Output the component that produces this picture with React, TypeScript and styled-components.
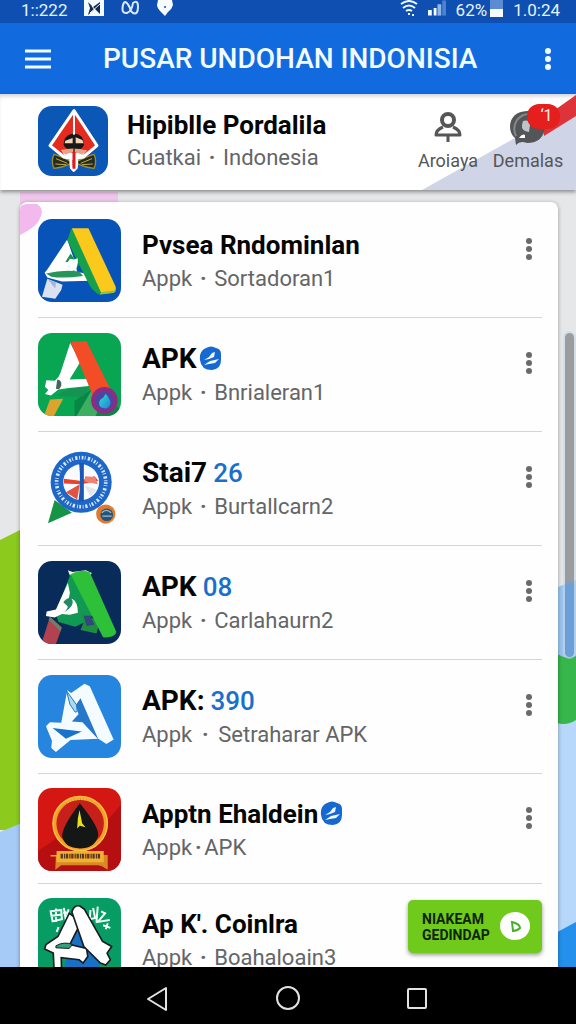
import React from "react";
import styled, { createGlobalStyle } from "styled-components";

const GlobalStyle = createGlobalStyle`
  *, *::before, *::after { box-sizing: border-box; }
  body { margin: 0; background: #000; font-family: Roboto, "Liberation Sans", sans-serif; }
  button { border: 0; padding: 0; background: none; font: inherit; color: inherit; cursor: pointer; }
  h1, h2, p, ul { margin: 0; padding: 0; }
  svg { display: block; }
`;

const Screen = styled.div`
  display: flex;
  flex-direction: column;
  height: 100vh;
  background: #e6e7e9;
`;

const StatusBar = styled.div`
  display: flex;
  align-items: flex-start;
  justify-content: space-between;
  flex: none;
  height: 23px;
  padding: 0 16px 0 21px;
  background: #0f4fb2;
  color: #e4f4ff;
  font-size: 17px;
  line-height: 20px;
`;

const StatusGroup = styled.div<{ $gap: number }>`
  display: flex;
  align-items: flex-start;
  gap: ${(p) => p.$gap}px;
`;

const BatteryGroup = styled.div`
  display: flex;
  align-items: flex-start;
  gap: 3px;
`;

const AppBar = styled.header`
  display: flex;
  align-items: center;
  flex: none;
  height: 71px;
  padding: 0 16px;
  background: #116bdf;
  color: #f2fbff;
`;

const BarButton = styled.button`
  display: grid;
  place-items: center;
  flex: none;
  width: 44px;
  height: 44px;
`;

const MoreBarButton = styled(BarButton)`
  width: 24px;
`;

const AppTitle = styled.h1`
  flex: 1;
  padding-left: 43px;
  font-size: 28px;
  line-height: 36px;
  font-weight: 500;
  white-space: nowrap;
`;

const Profile = styled.section`
  position: relative;
  z-index: 1;
  display: flex;
  align-items: flex-start;
  flex: none;
  height: 96px;
  padding: 12px 8px 0 38px;
  background: #fff;
  box-shadow: 0 2px 4px rgba(0, 0, 0, 0.4), inset 0 4px 4px -2px rgba(0, 0, 60, 0.2);
`;

const ProfileArt = styled.svg`
  position: absolute;
  top: 0;
  right: 0;
  width: 154px;
  height: 96px;
`;

const ProfileText = styled.div`
  flex: 1;
  padding: 2px 0 0 19px;
  white-space: nowrap;
`;

const ActionButton = styled.button`
  position: relative;
  display: flex;
  flex-direction: column;
  align-items: center;
  gap: 3px;
  width: 80px;
  padding-top: 4px;
  color: #555658;
  font-size: 18px;
  line-height: 24px;
`;

const Badge = styled.span`
  position: absolute;
  top: -2px;
  right: 8px;
  width: 33px;
  height: 25px;
  border-radius: 12px;
  background: #e41f1d;
  color: #fff0ee;
  font-size: 16px;
  line-height: 23px;
  padding-left: 6px;
`;

const Title = styled.h2<{ $large?: boolean }>`
  display: flex;
  align-items: center;
  color: #050505;
  font-size: ${(p) => (p.$large ? 28 : 26)}px;
  line-height: 34px;
  font-weight: 700;
  white-space: nowrap;
`;

const Subtitle = styled.p`
  color: #646567;
  font-size: 22px;
  line-height: 34px;
  white-space: nowrap;
`;

const ProfileSubtitle = styled(Subtitle)`
  line-height: 32px;
`;

const Separator = styled.span<{ $width?: number }>`
  display: inline-block;
  width: ${(p) => p.$width ?? 22}px;
  font-weight: 700;
  text-align: center;
`;

const Content = styled.main`
  position: relative;
  flex: 1;
  min-height: 0;
  padding: 12px 18px 0 20px;
  overflow: hidden;
`;

const Backdrop = styled.svg`
  position: absolute;
  inset: 0;
  width: 100%;
  height: 100%;
`;

const Card = styled.ul`
  position: relative;
  min-height: 100%;
  padding: 2px 16px 0 18px;
  list-style: none;
  background: #fefefe;
  border-radius: 7px 7px 0 0;
  box-shadow: 0 1px 4px rgba(0, 0, 0, 0.35);
`;

const CardCorner = styled.svg`
  position: absolute;
  top: 0;
  left: 0;
  width: 24px;
  height: 36px;
`;

const Row = styled.li<{ $compact?: boolean }>`
  position: relative;
  display: flex;
  align-items: flex-start;
  gap: 21px;
  padding: ${(p) => (p.$compact ? "14px 0 12px" : "15px 0")};
  border-bottom: 1px solid #d4d5d6;
`;

const AppIcon = styled.svg<{ $size: number }>`
  position: relative;
  flex: none;
  width: ${(p) => p.$size}px;
  height: ${(p) => p.$size}px;
  border-radius: 14px;
`;

const RowText = styled.div`
  flex: 1;
  padding-top: 9px;
`;

const Count = styled.span`
  margin-left: 6px;
  color: #1a6fcb;
  font-size: 26px;
  font-weight: 500;
`;

const VerifiedMark = styled.svg`
  flex: none;
  width: 22px;
  height: 24px;
  margin: 0 0 2px 2px;
`;

const MoreButton = styled.button`
  display: grid;
  place-items: center;
  flex: none;
  width: 26px;
  height: 60px;
  color: #6a6a6a;
`;

const Thumb = styled.div`
  position: absolute;
  top: 143px;
  right: 2px;
  width: 9px;
  height: 324px;
  border-radius: 5px;
  background: linear-gradient(#9b9c9e 0 76%, #6a9fd8 78%);
  box-shadow: 0 0 0 2px rgba(200, 215, 225, 0.55);
`;

const InstallButton = styled.button`
  position: absolute;
  right: 34px;
  bottom: 14px;
  display: flex;
  align-items: center;
  justify-content: space-between;
  width: 134px;
  height: 53px;
  padding: 0 12px 0 14px;
  border-radius: 5px;
  background: #70ca1c;
  box-shadow: 0 2px 4px rgba(0, 0, 0, 0.4);
  color: #10240a;
  font-size: 14px;
  line-height: 16px;
  font-weight: 700;
  text-align: left;
`;

const NavBar = styled.nav`
  position: relative;
  z-index: 2;
  display: flex;
  justify-content: center;
  flex: none;
  height: 57px;
  padding-bottom: 6px;
  background: #000;
`;

const NavButton = styled.button`
  display: grid;
  place-items: center;
  width: 130px;
  padding-top: 12px;
`;

const Dots = () => (
  <svg width="8" height="24" viewBox="0 0 8 24" fill="currentColor" aria-hidden="true">
    <circle cx="4" cy="4" r="3" />
    <circle cx="4" cy="12" r="3" />
    <circle cx="4" cy="20" r="3" />
  </svg>
);

const Verified = () => (
  <VerifiedMark viewBox="0 0 22 24" aria-label="Verified">
    <path d="M7 2Q12-1 17 2q5 1 5 6v6q0 9-9 10Q2 24 1 14 0 5 7 2Z" fill="#1769d2" />
    <path d="M5 14l5-3 3-4 3-1-1 5-5 2Z M5 19l6-4 9-2-4 4-6 1Z" fill="#eef8ff" />
  </VerifiedMark>
);

const ProfileIcon = () => (
  <AppIcon $size={70} viewBox="0 0 210 210" aria-hidden="true">
    <rect width="210" height="210" fill="#0b57b5" />
    <path d="M48 145q22 6 52 22l-6 8q-22 10-46 12-10-20 0-42Z M168 145q-22 6-52 22l6 8q22 10 46 12 10-20 0-42Z" fill="#252b20" stroke="#9b8d35" strokeWidth="4" />
    <path d="M54 158l34 14M52 174l32 2M162 158l-34 14M164 174l-32 2" stroke="#c4ad40" strokeWidth="3" />
    <path d="M108 14L36 119l42 34 20 4 2 28 7 8 8-8 1-28 20-4 41-34Z" fill="#e52a20" stroke="#fff" strokeWidth="9" strokeLinejoin="round" />
    <path d="M70 132q38 20 76 0l-14 22-24 10-26-10Z" fill="#fff" />
    <path d="M77 116q0-32 32-33 28 1 29 33-4 16-30 17-26-1-31-17Z" fill="#171718" />
    <path d="M82 104l22-8v16H80ZM113 94l20 8 4 10h-24Z" fill="#f3d5b3" />
    <path d="M68 132q40-10 80 2l-16 12q-26-13-50 0Z" fill="#eaa184" />
    <path d="M108 18v68" stroke="#fff" strokeWidth="6" />
    <path d="M108 86v52" stroke="#18222d" strokeWidth="4" />
    <path d="M108 138v50" stroke="#d81e20" strokeWidth="9" />
  </AppIcon>
);

const IconYellow = () => (
  <AppIcon $size={83} viewBox="0 0 250 250" aria-hidden="true">
    <rect width="250" height="250" fill="#0753b7" />
    <path d="M88 62L28 152l-8 10 8 14 44 12 88-2-8-20-34-6-10-40Z" fill="#fff" />
    <path d="M100 30h16l76 194-12 2q-20-14-30-36L88 64Z" fill="#16a04b" />
    <path d="M102 28h50l82 176q2 14-8 18l-34 4Z" fill="#fac91b" />
    <path d="M192 220l34-4q6 0 8-8 2 13-8 15l-42 5Z" fill="#8fc33d" />
    <path d="M98 104l-16 26 26-4-18 20 20 12 14-20-2-18-14-2Z" fill="#17904e" />
    <path d="M72 142l14-6 10-16 12 2 12-4v14l-6 24-42-4 24-10Z" fill="#fff" />
    <path d="M24 164q50-12 100-6l12 14q-58 8-96 2Z" fill="#27945c" />
    <path d="M28 180l46 18-4 16-18 26-40-6Z" fill="#dbe1f1" />
    <path d="M28 180l26 11-2 18Z" fill="#aab4d2" />
  </AppIcon>
);

const IconRed = () => (
  <AppIcon $size={83} viewBox="0 0 250 250" aria-hidden="true">
    <defs>
      <linearGradient id="drop" x1="0" y1="0" x2="1" y2="1">
        <stop offset="0" stopColor="#2fe0ce" />
        <stop offset="1" stopColor="#2380d9" />
      </linearGradient>
    </defs>
    <rect width="250" height="250" fill="#08a552" />
    <path d="M110 205l50-35 90 60v20H110Z" fill="#078746" />
    <path d="M116 250l46-78 34 20-22 58Z" fill="#3daf60" />
    <path d="M97 30l30 58-32 52 58-2v22l-60 6-32 4-22 18-18-4 10-12-10-10 4-20 26 2q12-10 16-22Z" fill="#fff" />
    <path d="M58 140q14 2 12 18-4 14-16 10Z" fill="#45655a" />
    <path d="M50 190l44-22 62-6-22 30Z" fill="#169354" />
    <path d="M98 26l48-1 72 144-30 38-24-22-20-48Z" fill="#f34d27" />
    <path d="M36 200l40-2-28 52H18Z" fill="#d9a52e" />
    <circle cx="200" cy="203" r="40" fill="#8c2c85" />
    <circle cx="200" cy="203" r="27" fill="#4b469f" />
    <path d="M204 183q16 20 14 30-4 15-18 14-17-2-16-17 1-10 12-15Z" fill="url(#drop)" />
  </AppIcon>
);

const IconWheel = () => (
  <AppIcon $size={83} viewBox="0 0 250 250" aria-hidden="true">
    <path d="M50 160l52 38-72 32Z" fill="#159447" />
    <circle cx="130" cy="106" r="92" fill="#1e67c7" />
    <circle cx="130" cy="106" r="74" fill="none" stroke="#d7e8ff" strokeWidth="11" strokeDasharray="4 3 2 5 5 4 2 4" pathLength="348" />
    <circle cx="130" cy="106" r="54" fill="#f8fbff" />
    <path d="M78 96l48 6 44-14 12 14-52 10-52-2Z" fill="#e7432f" />
    <path d="M126 112l-8 46-34-22Z" fill="#e25240" />
    <path d="M142 88l30 2 8 22-40-8Z" fill="#ee8273" />
    <path d="M126 50h10v112h-12q8-56 2-112Z" fill="#1a58b5" stroke="#1a58b5" strokeWidth="4" />
    <path d="M140 116l36 12-18 20Z" fill="#e4e5ec" />
    <circle cx="204" cy="202" r="29" fill="#e2792d" />
    <circle cx="207" cy="204" r="19" fill="#27527a" />
    <path d="M192 198q14-14 28 0M194 208h28" stroke="#9bc0cb" strokeWidth="4" fill="none" />
  </AppIcon>
);

const IconNavy = () => (
  <AppIcon $size={83} viewBox="0 0 250 250" aria-hidden="true">
    <rect width="250" height="250" fill="#082b59" />
    <path d="M90 28l14 5 40-5 18 8-6 10-60-2Z" fill="#eef8f2" />
    <path d="M98 40l70 116-14 22-42 20-50-14-10-28Z" fill="#119953" />
    <path d="M90 66l-36 80-28 6-2 14 26 4 22-10 24 2 24-6q0-34-18-42l-10 4 4-22Z" fill="#fff" />
    <path d="M76 124q20-22 28-5 6 18-26 36 18-18 8-22Z" fill="#258a64" />
    <path d="M130 154l56 30-10 34-48-10 10-24Z" fill="#208c42" />
    <path d="M138 166l20-2 12 28-24 4Z" fill="#32477e" />
    <path d="M98 40q34-18 58-6l80 180q-4 18-40 16Z" fill="#2fc03a" />
    <path d="M36 168l36 32-18 50H10Z" fill="#b34250" />
    <path d="M36 168l35 32-3 12-36-34Z" fill="#6c7f69" />
  </AppIcon>
);

const IconSky = () => (
  <AppIcon $size={83} viewBox="0 0 250 250" aria-hidden="true">
    <rect width="250" height="250" fill="#2585df" />
    <path d="M88 46l12 8 40-28 16 8 68 152 4 8-22 14-24-16-84 4-44 36-14-12 2-22-18-44 12-12 34 2Z" fill="#f5fcff" />
    <path d="M128 70l54 124-48-52-32-2 20-22-8-28Z" fill="#2678cb" />
    <path d="M44 160l88 10-48 22Z" fill="#1974c9" />
    <path d="M86 48l10 40 16 24 6-2-2-20-14-20Z" fill="#a8dcf2" stroke="#2775b8" strokeWidth="3" />
  </AppIcon>
);

const IconMedal = () => (
  <AppIcon $size={83} viewBox="0 0 250 250" aria-hidden="true">
    <rect width="250" height="250" fill="#d51713" />
    <path d="M250 50v200H0v-60l58-40 90 20Z" fill="#b50f12" />
    <circle cx="127" cy="107" r="77" fill="#c7201a" stroke="#f2a126" strokeWidth="11" />
    <circle cx="127" cy="107" r="82" fill="none" stroke="#ffc443" strokeWidth="4" />
    <path d="M86 42q42-20 84 0" fill="none" stroke="#efb13b" strokeWidth="9" strokeDasharray="6 3" />
    <path d="M126 46q64 78 54 102-12 34-54 34-46-2-53-36-2-28 53-100Z" fill="#151616" />
    <path d="M125 66l8 40 10 12-17-4-8 8 2-30Z" fill="#ecdf1d" />
    <path d="M54 202h156v44l-17-10-12-3H70l-18 13Z" fill="#d78b24" />
    <path d="M56 190h142v34H56Z" fill="#f3b134" />
    <path d="M68 205h120" stroke="#5b391a" strokeWidth="14" strokeDasharray="7 3 4 2" />
    <path d="M38 204h20" stroke="#f0a63a" strokeWidth="4" />
  </AppIcon>
);

const IconScript = () => (
  <AppIcon $size={83} viewBox="0 0 250 250" aria-hidden="true">
    <rect width="250" height="250" fill="#069c63" />
    <path d="M118 82l62 90 14 78H70l20-90Z" fill="#1771c4" />
    <path d="M38 40l32-4 2 28-28 6ZM54 32v40M38 54l34-4M78 30l6 38M76 46l16-4M92 34l-8 36M158 36l-2 28 16-4-6-30M180 26l-4 46M190 40l12 6-22 26 36-6M210 76l-6 18M196 82l22 8M62 88l-6 14" fill="none" stroke="#effff8" strokeWidth="6" />
    <path d="M94 46L60 116l-36 24-4 14 26 12 4 84h22l-2-70 54 6 12 10 14-20-4-24-50-12 34-68Z" fill="#fff" stroke="#171d20" strokeWidth="5" />
    <path d="M102 42q6-22 24-18l14 10 54 96 28 16-14 20 10 20-14 16-16-6-50-50Z" fill="#fff" stroke="#171d20" strokeWidth="5" strokeLinejoin="round" />
    <path d="M54 144q24-14 50-4l-10 12-40-2Z" fill="#31a37c" stroke="#171d20" strokeWidth="3" />
  </AppIcon>
);

type Entry = {
  title: string;
  publisher: string;
  Icon: React.ComponentType;
  count?: string;
  verified?: boolean;
  compact?: boolean;
  large?: boolean;
  hideMore?: boolean;
  separator?: number;
};

const entries: Entry[] = [
  { title: "Pvsea Rndominlan", publisher: "Sortadoran1", Icon: IconYellow },
  { title: "APK", publisher: "Bnrialeran1", Icon: IconRed, verified: true, large: true },
  { title: "Stai7", count: "26", publisher: "Burtallcarn2", Icon: IconWheel, large: true },
  { title: "APK", count: "08", publisher: "Carlahaurn2", Icon: IconNavy, large: true },
  { title: "APK:", count: "390", publisher: "Setraharar APK", Icon: IconSky, large: true, separator: 26 },
  { title: "Apptn Ehaldein", publisher: "APK", Icon: IconMedal, verified: true, compact: true, separator: 12 },
  { title: "Ap K'. Coinlra", publisher: "Boahaloain3", Icon: IconScript, compact: true, hideMore: true },
];

export default function App() {
  return (
    <Screen>
      <GlobalStyle />
      <StatusBar>
        <StatusGroup $gap={17}>
          <span>1::222</span>
          <svg width="20" height="17" viewBox="0 0 20 17" aria-hidden="true">
            <path d="M0 0h20v16H0Z" fill="#f4fbff" />
            <path d="M4 2l5 5 7-5v12l-5-5-7 6 2-7Z" fill="#152a50" />
            <path d="M6 13L16 4M8 6l5 7" stroke="#f4fbff" strokeWidth="1" />
          </svg>
          <svg width="18" height="15" viewBox="0 0 18 15" fill="none" stroke="#d7eaff" strokeWidth="2" aria-hidden="true">
            <path d="M9 8Q4-2 2 5q-2 9 4 8 5-2 6-10 5-4 5 4 0 8-5 6-3-2-3-5Z" />
          </svg>
          <svg width="18" height="17" viewBox="0 0 18 17" aria-hidden="true">
            <path d="M2 0h14l1 5q-1 4-5 7l-3 4-4-4Q1 8 1 5Z" fill="#f7fcff" />
            <circle cx="9" cy="7" r="1" fill="#1450a8" />
          </svg>
        </StatusGroup>
        <StatusGroup $gap={10}>
          <svg width="18" height="17" viewBox="0 0 18 17" fill="none" stroke="#eef8ff" strokeWidth="2" aria-hidden="true">
            <path d="M1 4q8-6 16 0M3 8q6-5 12 0M6 11q3-2 6 0" />
            <path d="M8 14h2M12 15h2" />
          </svg>
          <svg width="18" height="17" viewBox="0 0 19 17" aria-hidden="true">
            <path d="M0 10h4v6H0ZM6 8h3v8H6Z" fill="#f4fbff" />
            <path d="M10 4h4v12h-4Z" fill="#8db6ea" />
            <path d="M15 0h4v16h-4Z" fill="#4c82cf" />
          </svg>
          <BatteryGroup>
            <span>62%</span>
            <svg width="13" height="17" viewBox="0 0 13 17" aria-hidden="true">
              <path d="M0 0h13v9H0Z" fill="#5b8bd3" />
              <path d="M0 9h13v8H0Z" fill="#f7fcff" />
            </svg>
          </BatteryGroup>
          <span>1.0:24</span>
        </StatusGroup>
      </StatusBar>

      <AppBar>
        <BarButton aria-label="Menu">
          <svg width="26" height="20" viewBox="0 0 26 20" stroke="currentColor" strokeWidth="3" aria-hidden="true">
            <path d="M0 2h26M0 10h26M0 18h26" />
          </svg>
        </BarButton>
        <AppTitle>PUSAR UNDOHAN INDONISIA</AppTitle>
        <MoreBarButton aria-label="More options">
          <Dots />
        </MoreBarButton>
      </AppBar>

      <Profile>
        <ProfileArt viewBox="0 0 154 96" aria-hidden="true">
          <path d="M0 96L154 10V96Z" fill="#cfd4e6" />
          <path d="M120 25L154 1V22L122 42Z" fill="#dc3439" />
        </ProfileArt>
        <ProfileIcon />
        <ProfileText>
          <Title>Hipiblle Pordalila</Title>
          <ProfileSubtitle>
            Cuatkai<Separator>·</Separator>Indonesia
          </ProfileSubtitle>
        </ProfileText>
        <ActionButton>
          <svg width="30" height="36" viewBox="0 0 30 36" fill="none" stroke="#555658" strokeWidth="4" aria-hidden="true">
            <circle cx="15" cy="10" r="6" />
            <path d="M10 17q-7 3-7 8h24q0-5-7-8" strokeWidth="3" strokeLinejoin="round" />
            <path d="M15 26v6" strokeWidth="3" />
          </svg>
          Aroiaya
        </ActionButton>
        <ActionButton>
          <svg width="38" height="36" viewBox="0 0 38 36" aria-hidden="true">
            <path d="M7 35l-1-7Q1 24 1 16 2 2 18 1q17 0 18 15-1 17-18 17-7-3-11 2Z" fill="#535557" />
            <path d="M7 26Q3 18 8 10q5-6 12-6" fill="none" stroke="#85888b" strokeWidth="2" />
            <path d="M14 11q7-2 7 4l-1 7q-8-1-7-7Z" fill="#bfc4c8" />
            <path d="M10 28q3-5 6-3v3Z" fill="#fff" />
          </svg>
          Demalas
          <Badge>‘1</Badge>
        </ActionButton>
      </Profile>

      <Content>
        <Backdrop viewBox="0 0 576 777" preserveAspectRatio="none" aria-hidden="true">
          <path d="M20 2h98v12H20Z" fill="#efc6ec" />
          <path d="M0 350L24 338V640H0Z" fill="#8cca1d" />
          <path d="M0 642L24 632V777H0Z" fill="#a5cbf6" />
          <path d="M550 400l26-10V480H550Z" fill="#9dc5f1" />
          <path d="M550 458q14 14 26 8V640H550Z" fill="#36b64b" />
          <path d="M550 530q14 8 26 0V777H550Z" fill="#b7d8fb" />
          <path d="M550 746l26-14V777H550Z" fill="#2490ec" />
        </Backdrop>
        <Card>
          <CardCorner viewBox="0 0 24 36" aria-hidden="true">
            <path d="M0 8Q0 2 7 2h10q8 5 3 14-2 8-20 17Z" fill="#f3b8ee" />
          </CardCorner>
          {entries.map(({ title, publisher, Icon, count, verified, compact, large, hideMore, separator }) => (
            <Row key={publisher} $compact={compact}>
              <Icon />
              <RowText>
                <Title $large={large}>
                  {title}
                  {count && <Count>{count}</Count>}
                  {verified && <Verified />}
                </Title>
                <Subtitle>
                  Appk<Separator $width={separator}>·</Separator>
                  {publisher}
                </Subtitle>
              </RowText>
              {!hideMore && (
                <MoreButton aria-label={`Options for ${title}`}>
                  <Dots />
                </MoreButton>
              )}
            </Row>
          ))}
        </Card>
        <Thumb />
        <InstallButton>
          <span>
            NIAKEAM
            <br />
            GEDINDAP
          </span>
          <svg width="30" height="29" viewBox="0 0 30 29" aria-hidden="true">
            <ellipse cx="15" cy="14" rx="15" ry="14" fill="#fff" />
            <path d="M12 10q8 2 8 6-3 3-7 3Z" fill="none" stroke="#4cae27" strokeWidth="2" />
          </svg>
        </InstallButton>
      </Content>

      <NavBar>
        <NavButton aria-label="Back">
          <svg width="24" height="26" viewBox="0 0 24 26" fill="none" stroke="#e2e2e2" strokeWidth="2" aria-hidden="true">
            <path d="M2 13L20 2V24Z" strokeLinejoin="round" />
          </svg>
        </NavButton>
        <NavButton aria-label="Home">
          <svg width="26" height="26" viewBox="0 0 26 26" fill="none" stroke="#e2e2e2" strokeWidth="2" aria-hidden="true">
            <circle cx="13" cy="12" r="11" />
          </svg>
        </NavButton>
        <NavButton aria-label="Recent apps">
          <svg width="24" height="26" viewBox="0 0 24 26" fill="none" stroke="#e2e2e2" strokeWidth="2" aria-hidden="true">
            <rect x="2" y="3" width="18" height="19" rx="1" />
          </svg>
        </NavButton>
      </NavBar>
    </Screen>
  );
}
